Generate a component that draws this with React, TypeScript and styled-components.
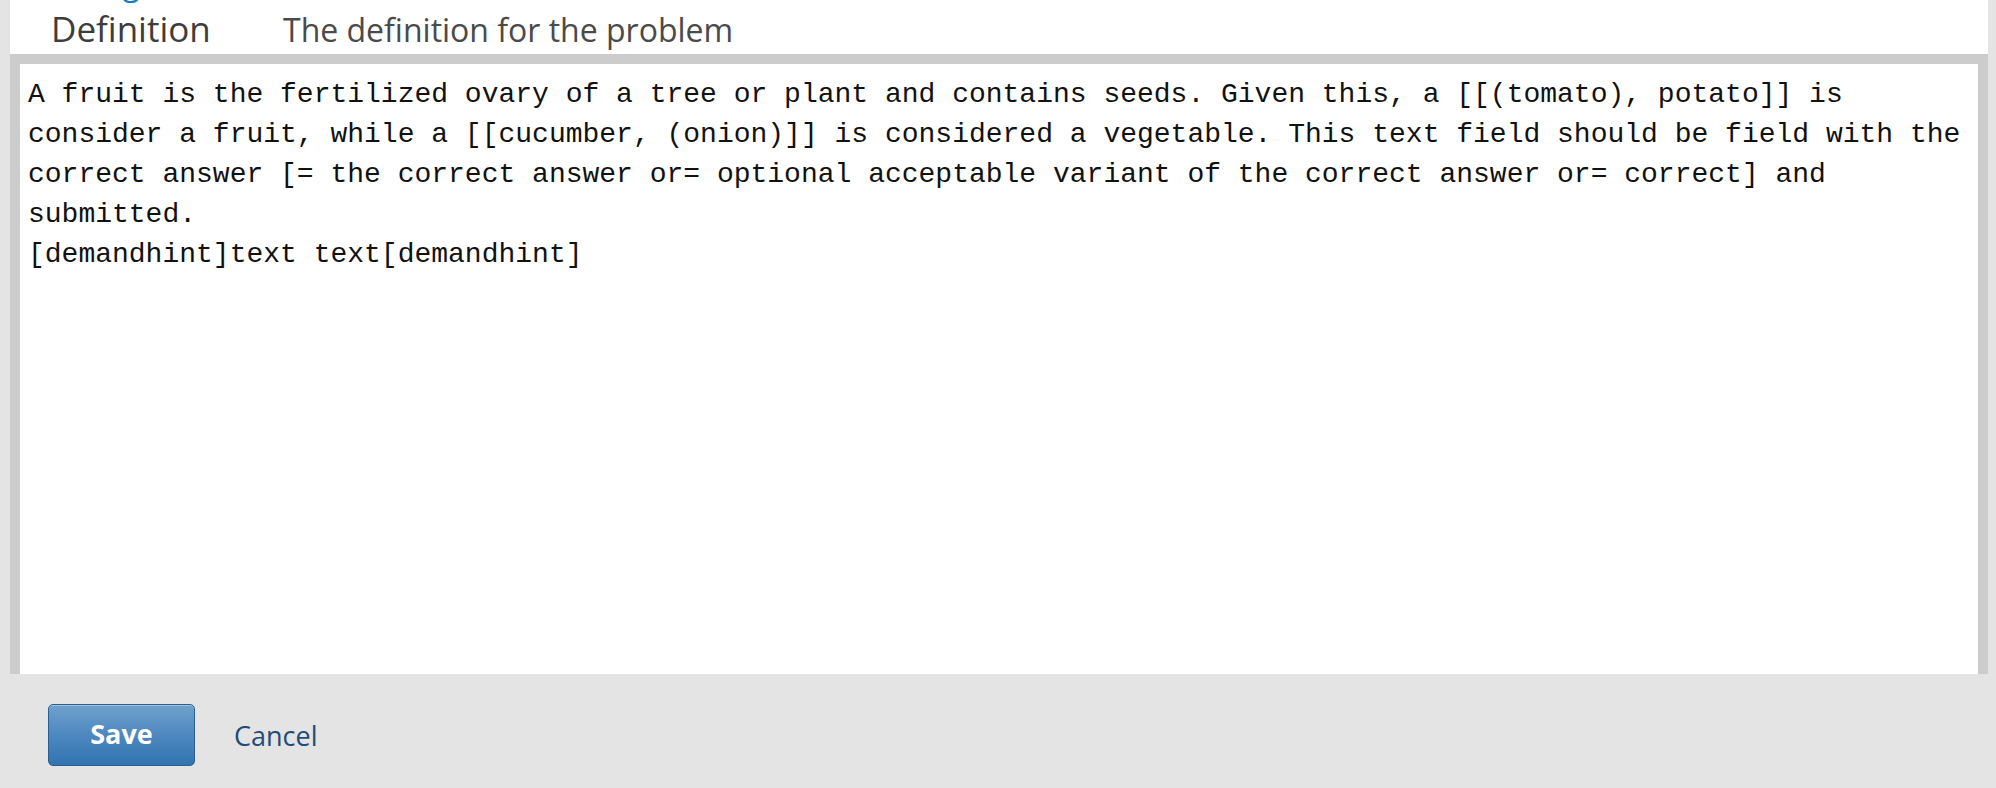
import React from 'react'
import styled, { createGlobalStyle } from 'styled-components'

const problemText = `A fruit is the fertilized ovary of a tree or plant and contains seeds. Given this, a [[(tomato), potato]] is consider a fruit, while a [[cucumber, (onion)]] is considered a vegetable. This text field should be field with the correct answer [= the correct answer or= optional acceptable variant of the correct answer or= correct] and submitted.
[demandhint]text text[demandhint]`

const GlobalStyle = createGlobalStyle`
  html, body {
    margin: 0;
    padding: 0;
    background: #e4e4e4;
  }

  * {
    box-sizing: border-box;
  }
`

export default function App() {
  return <Page>
    <GlobalStyle />
    <Panel>
      <Header>
        <PrevRow><span>Tags</span></PrevRow>
        <TitleRow>
          <Label>Definition</Label>
          <Help>The definition for the problem</Help>
        </TitleRow>
      </Header>

      <Editor>
        <TextArea defaultValue={problemText} spellCheck={false} />
      </Editor>

      <Actions>
        <SaveButton type="button">Save</SaveButton>
        <CancelLink href="#">Cancel</CancelLink>
      </Actions>
    </Panel>
  </Page>
}

const Page = styled.div`
  min-height: 100vh;
  padding: 0 8px 0 10px;
  background: #e4e4e4;
  font-family: 'Open Sans', 'Noto Sans', sans-serif;
`

const Panel = styled.div`
  display: flex;
  flex-direction: column;
`

const Header = styled.div`
  background: #fff;
  height: 54px;
  padding-left: 41px;
`

// the row above is scrolled out of view, only its descenders peek in
const PrevRow = styled.div`
  height: 4px;
  overflow: hidden;
  padding-left: 36px;

  span {
    display: block;
    font-size: 32px;
    line-height: 32px;
    margin-top: -33px;
    color: #1a7cc1;
  }
`

const TitleRow = styled.div`
  display: flex;
  align-items: baseline;
  padding-top: 1px;
`

const Label = styled.div`
  width: 232px;
  font-size: 35px;
  color: #3d3d3d;
`

const Help = styled.div`
  font-size: 32px;
  color: #4a4a4a;
`

const Editor = styled.div`
  height: 620px;
  border: 10px solid #cccccc;
  border-bottom: 0;
  background: #fff;
`

const TextArea = styled.textarea`
  display: block;
  width: 100%;
  height: 100%;
  margin: 0;
  padding: 11px 8px;
  border: 0;
  outline: none;
  resize: none;
  overflow: hidden;
  background: #fff;
  font-family: 'Liberation Mono', 'DejaVu Sans Mono', monospace;
  font-size: 28px;
  line-height: 40px;
  color: #111;
`

const Actions = styled.div`
  display: flex;
  align-items: center;
  gap: 39px;
  height: 114px;
  padding: 30px 0 22px 38px;
`

const SaveButton = styled.button`
  width: 147px;
  height: 62px;
  padding: 0 0 3px;
  border: 1px solid #2b5f92;
  border-radius: 5px;
  background: linear-gradient(to bottom, #70a1cd 0%, #4d88bf 50%, #3273b0 100%);
  box-shadow: inset 0 1px 0 rgba(255, 255, 255, 0.35);
  color: #fff;
  font-family: 'Open Sans', 'Noto Sans', sans-serif;
  font-weight: 700;
  font-size: 27px;
  cursor: pointer;
`

const CancelLink = styled.a`
  color: #1f4d78;
  font-size: 27px;
  text-decoration: none;
`
